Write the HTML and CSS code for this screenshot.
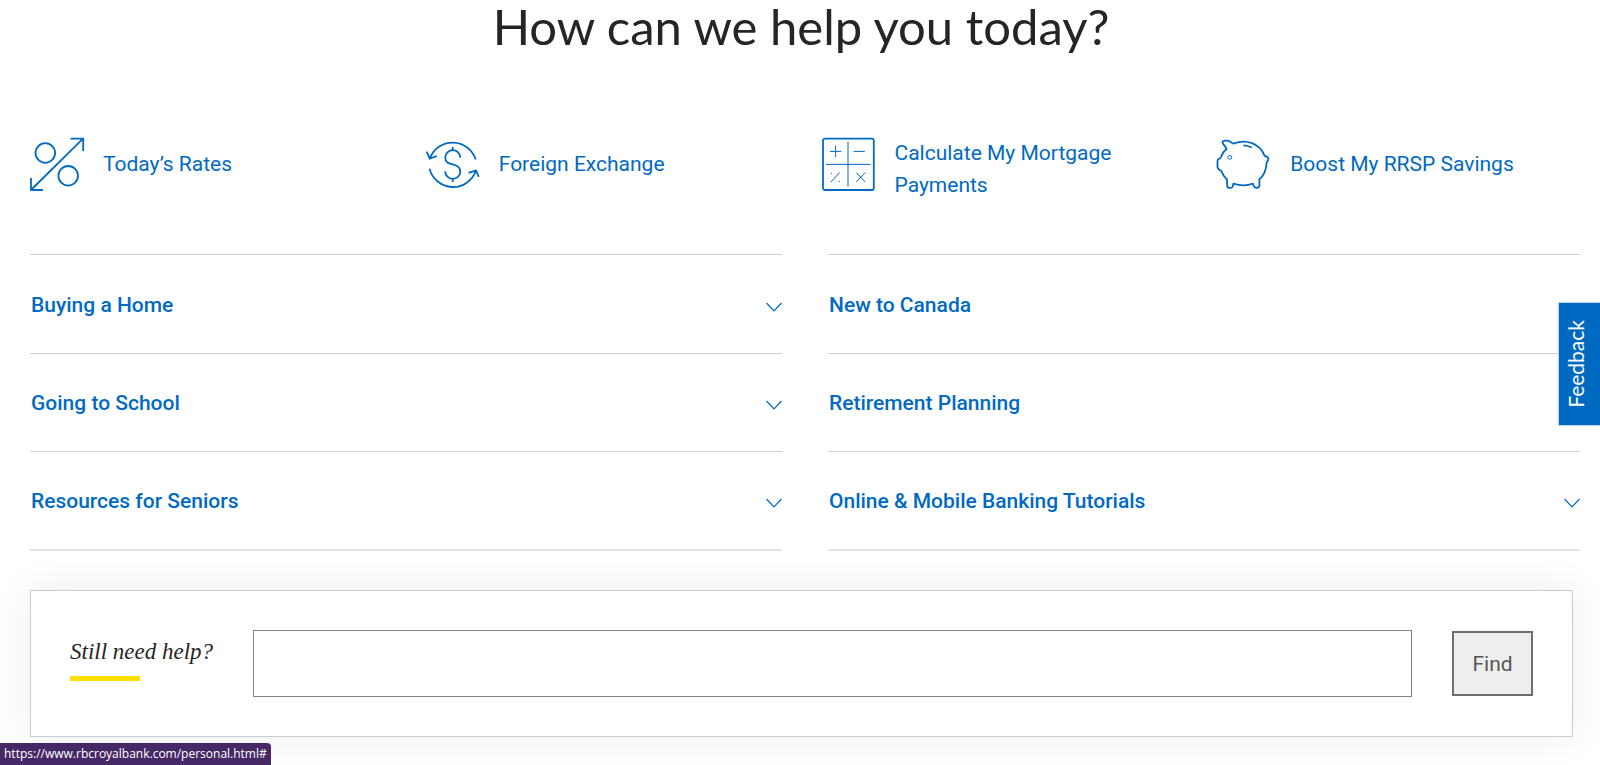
FILE: index.html
```html
<!DOCTYPE html>
<html lang="en">
<head>
<meta charset="utf-8">
<meta name="viewport" content="width=device-width, initial-scale=1">
<title>Personal Banking</title>
<link rel="stylesheet" href="styles.css">
</head>
<body>
<main class="page">
  <h1 class="title">How can we help you today?</h1>

  <nav class="quick" aria-label="Quick links">
    <a class="quick-link" href="#">
      <svg class="icon" viewBox="0 0 54 54" aria-hidden="true">
        <path d="M1 53 53 1.7M40.5 1.7H53.2V14M1 41V53H13"/>
        <circle cx="15.3" cy="16" r="9.8"/><circle cx="38.2" cy="38.8" r="9.8"/>
      </svg>
      <span class="quick-text">Today’s Rates</span>
    </a>
    <a class="quick-link" href="#">
      <svg class="icon" viewBox="0 0 54 54" aria-hidden="true">
        <path d="M3.8 21.6A24.2 24.2 0 0 1 49.7 22.6M3.5 31.6A24.2 24.2 0 0 0 50 33.3M.7 14.7 3.7 21.7 10.8 19M42.6 35.8 50 33.3 52.8 39.8"/>
        <path d="M26.7 10V13.2M26.7 41.8V45M34.3 20.8C34.3 16.5 31 13.2 26.8 13.2S19.2 16.5 19.2 20.6C19.2 25.6 23 26.4 26.8 27.4S34.3 29.6 34.3 34.4C34.3 38.6 31 41.8 26.8 41.8S19.2 38.5 19.2 34.2"/>
      </svg>
      <span class="quick-text">Foreign Exchange</span>
    </a>
    <a class="quick-link" href="#">
      <svg class="icon" viewBox="0 0 54 54" aria-hidden="true">
        <rect x="1" y="1.6" width="50.8" height="51.4" rx="2"/>
        <path class="thin" d="M26 4.7V49.7M4 27.4H48.4M13.6 8.6V20M7.9 14.4H19.4M31.5 14.4H42.8M9 45 17.6 35.4M34.2 35.6 43.2 44.9M43.2 35.6 34.2 44.9M9 36.4H10M16.5 44.4H17.7"/>
      </svg>
      <span class="quick-text">Calculate My Mortgage Payments</span>
    </a>
    <a class="quick-link" href="#">
      <svg class="icon" viewBox="0 0 54 54" aria-hidden="true">
        <path d="M5.4 5.2C5 3.8 10.5 2.8 13 4.4 14.4 5.4 15.3 7 17 6.4 29 2.2 42.5 6 47.5 18.6 48 19.6 51.5 19 51.4 22 51.3 24 49.5 25 49.5 26.5 49.2 33.5 47.5 38 42.4 42.3V48.5C42.4 51.4 37.5 51.6 36.8 49L36 46.7C29.5 49 23 48.8 16.4 46.7L15.8 49.5C15.2 51.5 10.4 51.5 10.2 49.2L10 42.6C7.4 40 5.4 37 4.4 34.2 3.8 32.5.5 33.6.5 29.6V24C.5 21 3 22.3 3.8 20.5 4.8 17.4 7 14 9.6 11.8 8 8.6 6 7.6 5.4 5.2Z"/>
        <path d="M26.4 8.4C29 8.5 32 9.1 34.8 10.5"/>
        <circle class="thin" cx="12.8" cy="20.4" r="1.9"/>
      </svg>
      <span class="quick-text">Boost My RRSP Savings</span>
    </a>
  </nav>

  <div class="topics">
    <div class="topic-list">
      <button class="topic" type="button">Buying a Home<svg class="chevron" viewBox="0 0 16 10" aria-hidden="true"><path d="M.5 1 8 8.8 15.5 1"/></svg></button>
      <button class="topic" type="button">Going to School<svg class="chevron" viewBox="0 0 16 10" aria-hidden="true"><path d="M.5 1 8 8.8 15.5 1"/></svg></button>
      <button class="topic" type="button">Resources for Seniors<svg class="chevron" viewBox="0 0 16 10" aria-hidden="true"><path d="M.5 1 8 8.8 15.5 1"/></svg></button>
    </div>
    <div class="topic-list">
      <a class="topic" href="#">New to Canada</a>
      <a class="topic" href="#">Retirement Planning</a>
      <button class="topic" type="button">Online &amp; Mobile Banking Tutorials<svg class="chevron" viewBox="0 0 16 10" aria-hidden="true"><path d="M.5 1 8 8.8 15.5 1"/></svg></button>
    </div>
  </div>

  <form class="help">
    <label class="help-label" for="question">Still need help?</label>
    <input class="help-input" id="question" type="text">
    <button class="help-find" type="button">Find</button>
  </form>
</main>

<button class="feedback" type="button">Feedback</button>
<div class="status">https://www.rbcroyalbank.com/personal.html#</div>
</body>
</html>
```

FILE: styles.css
```css
:root {
  --blue: #006ac3;
  --rule: #cfcfcf;
}

* {
  box-sizing: border-box;
}

body {
  margin: 0;
  background: #fff;
  color: #252525;
  font-family: Roboto, "Liberation Sans", sans-serif;
  font-size: 21px;
  line-height: 32px;
}

a {
  color: var(--blue);
  text-decoration: none;
}

button,
input {
  font: inherit;
}

.page {
  padding: 0 20px 28px 30px;
}

.title {
  margin: 0;
  padding-right: 8px;
  font-family: Lato, "Open Sans", sans-serif;
  font-size: 49px;
  font-weight: 400;
  line-height: 52px;
  text-align: center;
}

.quick {
  display: grid;
  grid-template-columns: repeat(4, 1fr);
  gap: 33px;
  margin-top: 85px;
}

.quick-link {
  display: flex;
  align-items: flex-start;
  gap: 19px;
  padding-right: 60px;
}

.quick-link:last-child {
  padding-right: 0;
}

.quick-text {
  display: flex;
  align-items: center;
  min-height: 54px;
}

.icon {
  flex: none;
  width: 54px;
  height: 54px;
  overflow: visible;
  fill: none;
  stroke: var(--blue);
  stroke-width: 1.8;
  stroke-linejoin: round;
}

.icon .thin {
  stroke-width: 1;
}

.topics {
  display: grid;
  grid-template-columns: 1fr 1fr;
  gap: 46px;
  margin-top: 53px;
}

.topic-list {
  padding-top: 1px;
  border-top: 1px solid var(--rule);
  border-bottom: 1px solid #e2e2e2;
}

.topic {
  display: flex;
  align-items: center;
  justify-content: space-between;
  width: 100%;
  height: 98px;
  padding: 0 0 0 1px;
  border: 0;
  border-bottom: 1px solid var(--rule);
  background: none;
  color: var(--blue);
  font-weight: 500;
  text-align: left;
}

.topic:last-child {
  border-bottom-color: #e2e2e2;
}

.chevron {
  width: 16px;
  height: 10px;
  margin-top: 4px;
  fill: none;
  stroke: var(--blue);
  stroke-width: 1.2;
}

.help {
  display: flex;
  align-items: center;
  gap: 40px;
  margin: 39px 7px 0 0;
  padding: 39px;
  border: 1px solid #c9cdd1;
  background: #fff;
  box-shadow: 0 0 40px rgba(0, 0, 0, 0.07);
}

.help-label {
  padding-bottom: 10px;
  font-family: "Liberation Serif", serif;
  font-size: 23px;
  font-style: italic;
}

.help-label::after {
  content: "";
  display: block;
  width: 70px;
  height: 5px;
  margin-top: 8px;
  background: #fedf01;
}

.help-input {
  flex: 1;
  min-width: 0;
  height: 67px;
  padding: 0 16px;
  border: 1px solid #858585;
  border-radius: 0;
  background: #fff;
}

.help-find {
  min-width: 81px;
  height: 65px;
  padding: 0 18px;
  border: 2px solid #6e6e6e;
  background: #eee;
  color: #555;
}

.feedback {
  position: fixed;
  top: 302px;
  right: 0;
  width: 42px;
  height: 124px;
  padding: 0 8px 0 0;
  border: 1px solid #b9d3ea;
  border-right: 0;
  background: var(--blue);
  color: #fff;
  font-family: Lato, sans-serif;
  font-size: 21px;
  line-height: 32px;
  writing-mode: sideways-lr;
}

.status {
  position: fixed;
  bottom: 0;
  left: 0;
  padding: 0 4px;
  border-top-right-radius: 4px;
  background: #462866;
  color: #fff;
  font-family: "Open Sans", "Noto Sans", sans-serif;
  font-size: 12px;
  line-height: 22px;
}
```
